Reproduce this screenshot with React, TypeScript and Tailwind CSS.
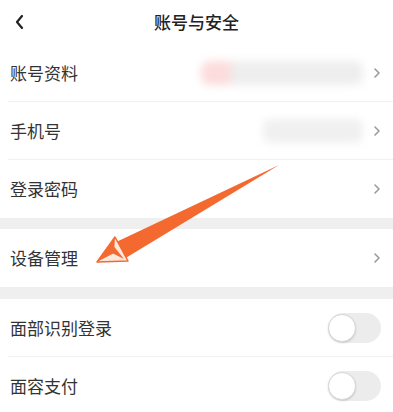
import React from "react"

const font = { fontFamily: '"Noto Sans CJK SC", "Noto Sans", sans-serif' }

function Chevron() {
  return (
    <svg width="8" height="12" viewBox="0 0 8 12" className="shrink-0">
      <path d="M2 2 L6 6 L2 10" fill="none" stroke="#9a9a9a" strokeWidth="1.6" strokeLinecap="round" strokeLinejoin="round" />
    </svg>
  )
}

function Toggle() {
  return (
    <div className="relative w-[53px] h-[30px] rounded-full bg-[#ececec] shrink-0">
      <div className="absolute left-0 top-[1px] w-[28px] h-[28px] rounded-full bg-white border border-[#d8d8d8] shadow-[0_1px_2px_rgba(0,0,0,0.15)]" />
    </div>
  )
}

function Row({ label, right, divider = true }: { label: string; right: React.ReactNode; divider?: boolean }) {
  return (
    <div className="relative flex items-center justify-between h-[58px] pl-[10px] pr-[12px] bg-white">
      <span className="text-[17px] text-[#333]">{label}</span>
      {right}
      {divider && <div className="absolute left-[8px] right-0 bottom-0 h-px bg-[#f1f1f1]" />}
    </div>
  )
}

export default function App() {
  return (
    <div className="relative w-[393px] h-[412px] overflow-hidden bg-white" style={font}>
      {/* Header */}
      <div className="relative flex items-center justify-center h-[44px]">
        <svg width="10" height="16" viewBox="0 0 10 16" className="absolute left-[14px] top-[14px]">
          <path d="M8 2 L3 8 L8 14" fill="none" stroke="#222" strokeWidth="2.2" strokeLinecap="round" strokeLinejoin="round" />
        </svg>
        <span className="text-[17px] font-medium text-[#222]">账号与安全</span>
      </div>

      <Row
        label="账号资料"
        right={
          <div className="flex items-center gap-[10px]">
            <div className="flex items-center w-[162px] h-[24px] rounded-lg blur-[4px] overflow-hidden">
              <div className="w-[30px] h-full bg-[#fcdcdc]" />
              <div className="flex-1 h-full bg-[#eeeeee]" />
            </div>
            <Chevron />
          </div>
        }
      />
      <Row
        label="手机号"
        right={
          <div className="flex items-center gap-[10px]">
            <div className="w-[100px] h-[24px] rounded-lg bg-[#f0f0f0] blur-[4px]" />
            <Chevron />
          </div>
        }
      />
      <Row label="登录密码" right={<Chevron />} divider={false} />
      <div className="h-[11px] bg-[#efefef]" />
      <Row label="设备管理" right={<Chevron />} divider={false} />
      <div className="h-[12px] bg-[#efefef]" />
      <Row label="面部识别登录" right={<Toggle />} />
      <Row label="面容支付" right={<Toggle />} divider={false} />

      {/* Annotation arrow */}
      <svg className="absolute left-0 top-0 pointer-events-none" width="393" height="412" viewBox="0 0 393 412">
        <polygon points="279,165 112,244 124,259" fill="#f4692f" />
        <polygon points="97,262 115,237 128,261" fill="#fde8dc" stroke="#f4692f" strokeWidth="1.5" strokeLinejoin="round" />
        <polygon points="97,262 115,237 114,253" fill="#f4692f" />
        <polygon points="112,244 124,259 112,253" fill="#f4692f" />
      </svg>
    </div>
  )
}
